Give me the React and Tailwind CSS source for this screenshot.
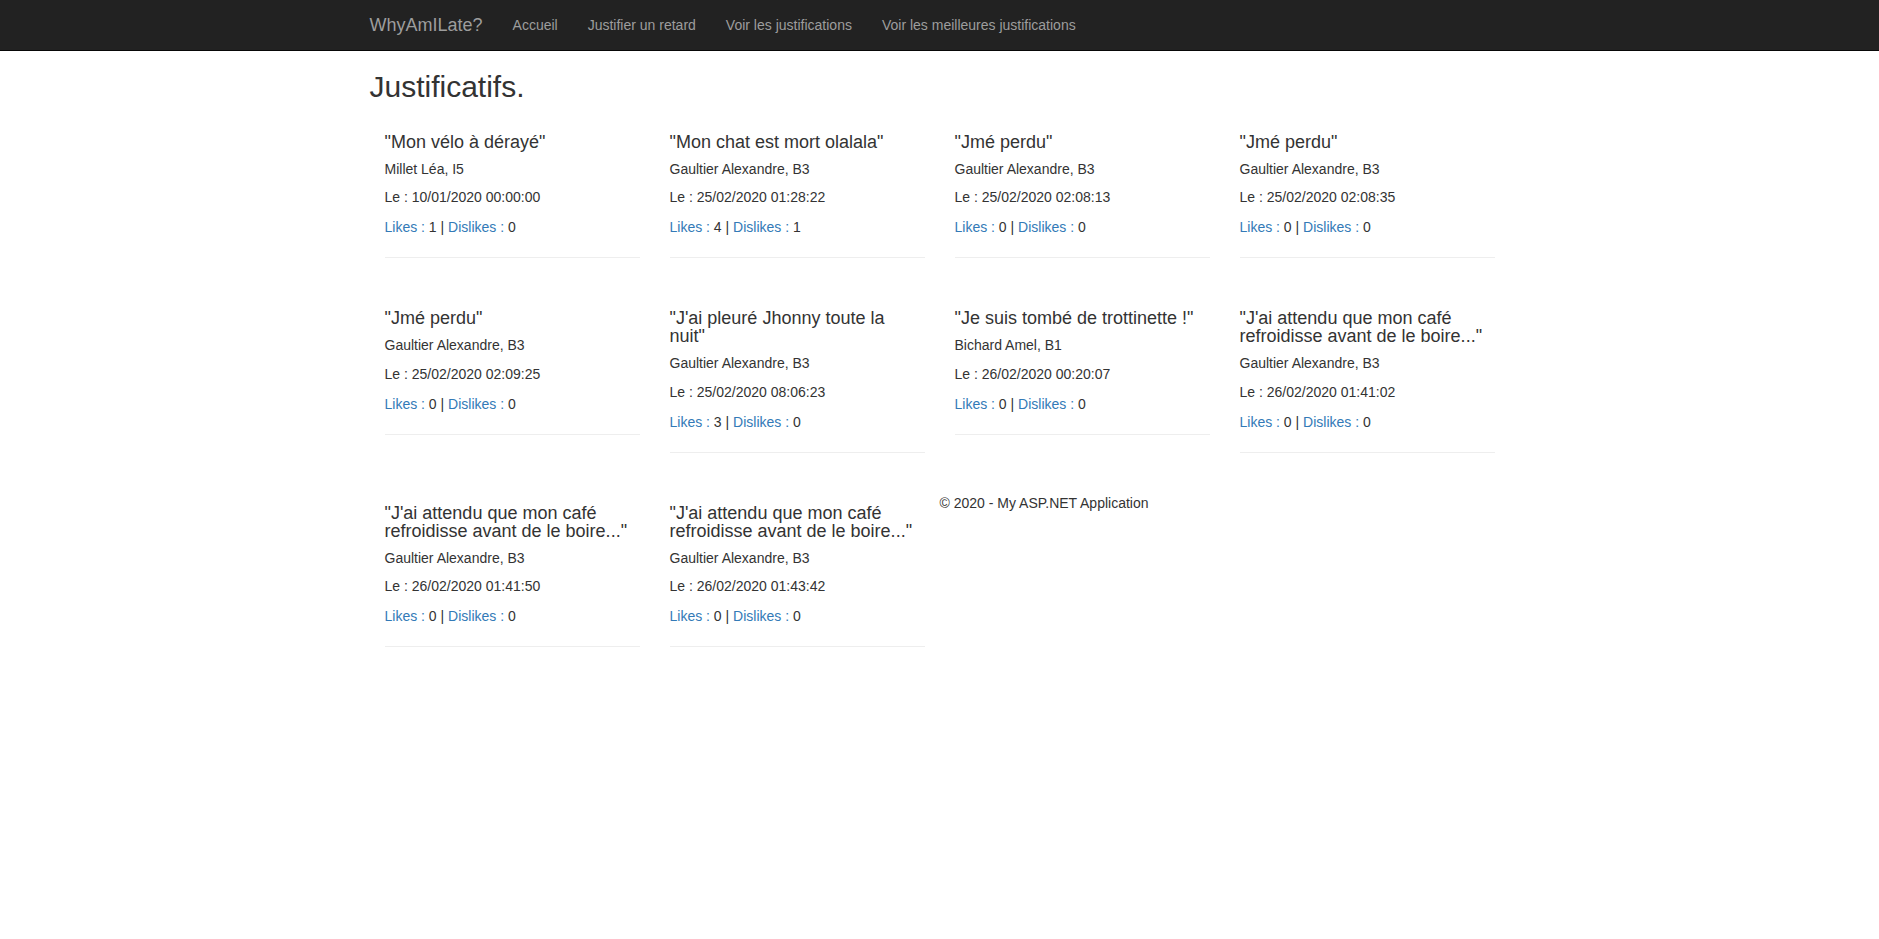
import React from 'react';

const justifs = [
  { title: 'Mon vélo à dérayé', author: 'Millet Léa, I5', date: '10/01/2020 00:00:00', likes: 1, dislikes: 0 },
  { title: 'Mon chat est mort olalala', author: 'Gaultier Alexandre, B3', date: '25/02/2020 01:28:22', likes: 4, dislikes: 1 },
  { title: 'Jmé perdu', author: 'Gaultier Alexandre, B3', date: '25/02/2020 02:08:13', likes: 0, dislikes: 0 },
  { title: 'Jmé perdu', author: 'Gaultier Alexandre, B3', date: '25/02/2020 02:08:35', likes: 0, dislikes: 0 },
  { title: 'Jmé perdu', author: 'Gaultier Alexandre, B3', date: '25/02/2020 02:09:25', likes: 0, dislikes: 0 },
  { title: "J'ai pleuré Jhonny toute la nuit", author: 'Gaultier Alexandre, B3', date: '25/02/2020 08:06:23', likes: 3, dislikes: 0 },
  { title: 'Je suis tombé de trottinette !', author: 'Bichard Amel, B1', date: '26/02/2020 00:20:07', likes: 0, dislikes: 0 },
  { title: "J'ai attendu que mon café refroidisse avant de le boire...", author: 'Gaultier Alexandre, B3', date: '26/02/2020 01:41:02', likes: 0, dislikes: 0 },
  { title: "J'ai attendu que mon café refroidisse avant de le boire...", author: 'Gaultier Alexandre, B3', date: '26/02/2020 01:41:50', likes: 0, dislikes: 0 },
  { title: "J'ai attendu que mon café refroidisse avant de le boire...", author: 'Gaultier Alexandre, B3', date: '26/02/2020 01:43:42', likes: 0, dislikes: 0 },
];

const navLinks = ['Accueil', 'Justifier un retard', 'Voir les justifications', 'Voir les meilleures justifications'];

function Card({ item }) {
  return (
    <div className="px-[15px] pt-[20px] pb-[30px]">
      <h4 className="pt-[1px] text-[18px] leading-[18px] mb-[11px]">"{item.title}"</h4>
      <h5 className="text-[14px] leading-[1.1] mb-[10px]">{item.author}</h5>
      <p className="leading-[20px] mb-[10px]">Le : {item.date}</p>
      <p className="leading-[20px]">
        <a href="#" className="text-[#337ab7]">Likes :</a> {item.likes} |{' '}
        <a href="#" className="text-[#337ab7]">Dislikes :</a> {item.dislikes}
      </p>
      <hr className="mt-[20px] border-t border-[#eee]" />
    </div>
  );
}

export default function App() {
  return (
    <div className="min-h-screen bg-white text-[14px] text-[#333] font-['Liberation_Sans',Arial,sans-serif]">
      {/* navbar */}
      <header className="h-[51px] bg-[#222] border-b border-[#080808]">
        <div className="w-[1170px] mx-auto px-[15px] flex items-start">
          <a href="#" className="-ml-[15px] px-[15px] py-[15px] text-[18px] leading-[20px] text-[#9d9d9d]">
            WhyAmILate?
          </a>
          <nav className="flex">
            {navLinks.map((l) => (
              <a key={l} href="#" className="px-[15px] py-[15px] leading-[20px] text-[#9d9d9d]">
                {l}
              </a>
            ))}
          </nav>
        </div>
      </header>

      {/* content */}
      <main className="w-[1170px] mx-auto px-[15px]">
        <h2 className="mt-[19px] mb-[9px] text-[30px] leading-[1.1] font-normal">Justificatifs.</h2>

        <div className="grid grid-cols-4 items-start">
          {justifs.map((j, i) => (
            <Card key={i} item={j} />
          ))}
          <footer className="pt-[10px]">
            <p className="leading-[20px]">© 2020 - My ASP.NET Application</p>
          </footer>
        </div>
      </main>
    </div>
  );
}
